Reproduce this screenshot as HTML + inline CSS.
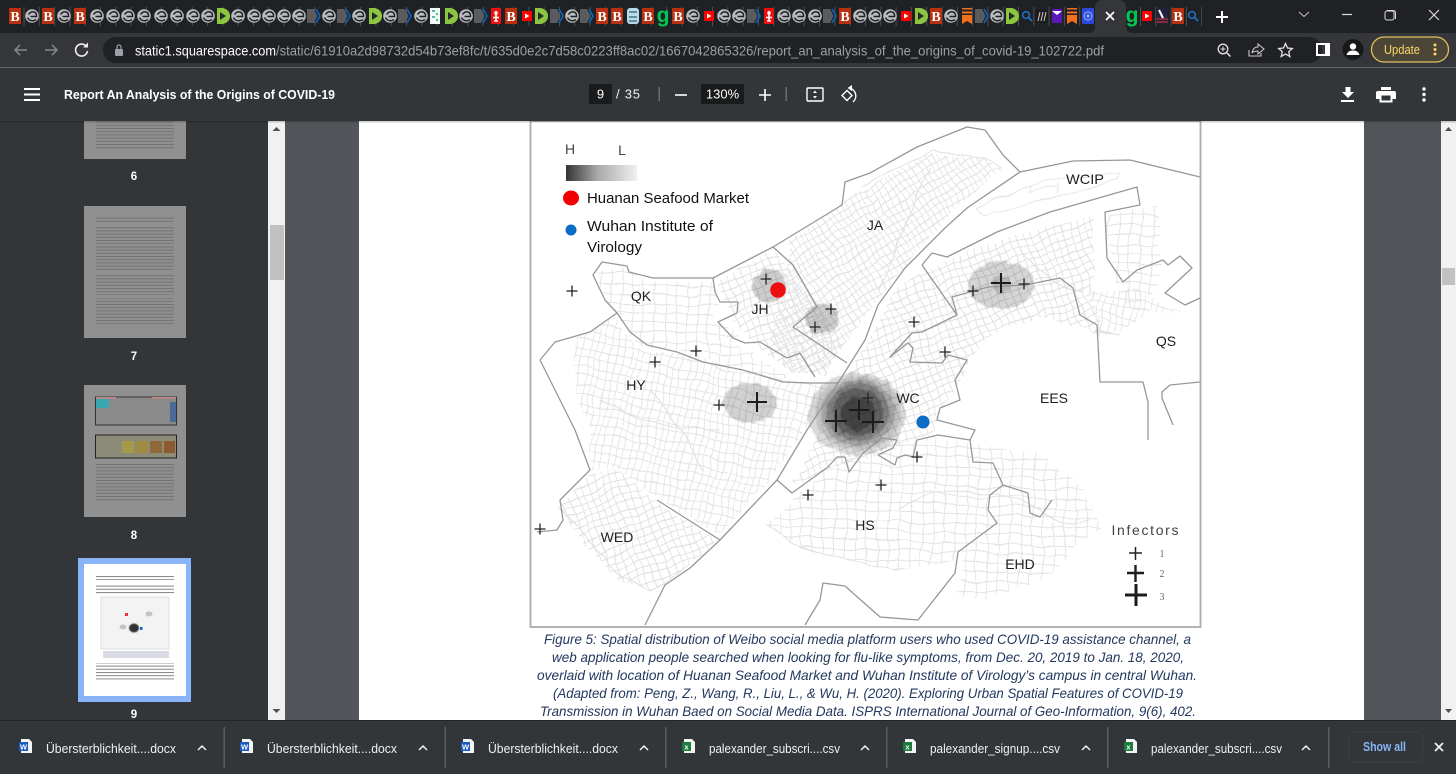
<!DOCTYPE html>
<html><head><meta charset="utf-8"><title>Report An Analysis of the Origins of COVID-19</title>
<style>html,body{margin:0;padding:0;width:1456px;height:774px;overflow:hidden;background:#323639}svg{display:block}text{font-family:"Liberation Sans",sans-serif}</style></head>
<body>
<svg xmlns="http://www.w3.org/2000/svg" width="1456" height="774" viewBox="0 0 1456 774">
<defs>
<symbol id="sw" overflow="visible"><circle r="6.800" fill="#b9bcbf"/><path d="M-3.500-1.500Q-1-5 2-4Q5-3 4.500 0.500H-1.500M-4.500 1.500Q-3 5 1 4.800Q3 4.500 4 3.500" stroke="#202124" stroke-width="1.500" fill="none"/></symbol>
<symbol id="d" overflow="visible"><path d="M-6-8H0Q7-6 7 0T0 8H-6Z" fill="#8cc63f"/><path d="M-3-4 3 0-3 4Z" fill="#26292b"/></symbol>
<symbol id="ch" overflow="visible"><path d="M-7-7H0L3.500 0 0 7H-7Z" fill="#5a5b5e"/><path d="M2-7 6 0 2 7" stroke="#0a66c2" stroke-width="1.600" fill="none"/></symbol>
<symbol id="yt" overflow="visible"><rect x="-5" y="-5" width="10" height="10" fill="#f00"/><path d="M-2-2.500 2.500 0-2 2.500Z" fill="#fff"/></symbol>
<symbol id="rd" overflow="visible"><rect x="-5" y="-8" width="10" height="16" fill="#ea1010"/><path d="M-3 1.500H3M-2 5H2M0-5V5" stroke="#fff" stroke-width="1.600"/><circle cy="-3" r="1.800" fill="#fff"/></symbol>
<symbol id="or" overflow="visible"><path d="M-5-8H5V-6.500H-5ZM-5-4.500H5V-2.500H-5ZM-5-1H5V8L0 5-5 8Z" fill="#f26f1d"/></symbol>
<symbol id="se" overflow="visible"><circle cx="-1" cy="-1" r="3.400" stroke="#1a73c8" stroke-width="1.500" fill="none"/><path d="M1.500 1.500 5 5" stroke="#1a73c8" stroke-width="1.700"/></symbol>
<pattern id="p1" width="17" height="15" patternUnits="userSpaceOnUse" patternTransform="rotate(-32)"><path d="M0 4H17M0 11H17M4 0V15M10 0V15M15 0V15" stroke="#e2e2e2" stroke-width=".9" fill="none"/></pattern>
<pattern id="p2" width="20" height="18" patternUnits="userSpaceOnUse" patternTransform="rotate(12)"><path d="M0 4H20M0 12H20M3 0V18M11 0V18M17 0V18" stroke="#e4e4e4" stroke-width=".9" fill="none"/></pattern>
<pattern id="p3" width="15" height="15" patternUnits="userSpaceOnUse" patternTransform="rotate(-20)"><path d="M0 4H15M0 11H15M4 0V15M12 0V15" stroke="#e0e0e0" stroke-width=".9" fill="none"/></pattern>
<pattern id="p4" width="22" height="19" patternUnits="userSpaceOnUse" patternTransform="rotate(2)"><path d="M0 5H22M0 15H22M5 0V19M16 0V19" stroke="#e2e2e2" stroke-width=".9" fill="none"/></pattern>
<linearGradient id="lg"><stop offset="0" stop-color="#333"/><stop offset=".45" stop-color="#aaa"/><stop offset="1" stop-color="#f0f0f0"/></linearGradient>
<filter id="bl" filterUnits="userSpaceOnUse" x="700" y="240" width="360" height="240"><feTurbulence type="fractalNoise" baseFrequency=".13" numOctaves="2" seed="7" result="n"/><feDisplacementMap in="SourceGraphic" in2="n" scale="6" xChannelSelector="R" yChannelSelector="G"/><feGaussianBlur stdDeviation=".7"/></filter>
<filter id="b5"><feGaussianBlur stdDeviation=".45"/></filter>
<filter id="wav" filterUnits="userSpaceOnUse" x="530" y="121" width="670" height="506"><feTurbulence type="fractalNoise" baseFrequency=".035" numOctaves="2" seed="4" result="n"/><feDisplacementMap in="SourceGraphic" in2="n" scale="9" xChannelSelector="R" yChannelSelector="G"/><feGaussianBlur stdDeviation=".3"/></filter>
<pattern id="tl" width="80" height="3.200" patternUnits="userSpaceOnUse"><rect width="80" height="1" fill="#444" opacity=".38"/></pattern>
<pattern id="tw" width="80" height="3.200" patternUnits="userSpaceOnUse"><rect width="80" height="1" fill="#333" opacity=".6"/></pattern>
</defs>

<!-- tab strip -->
<rect width="1456" height="33" fill="#202124"/>
<line x1="23.500" y1="16.500" x2="1092" y2="16.500" stroke="#4c4e52" stroke-width="19" stroke-dasharray="1 14.300"/>
<line x1="1140" y1="16.500" x2="1202" y2="16.500" stroke="#4c4e52" stroke-width="19" stroke-dasharray="1 14.300"/>
<g fill="#b8300f"><rect x="9" y="8" width="12" height="16"/><rect x="42" y="8" width="12" height="16"/><rect x="74" y="8" width="12" height="16"/><rect x="505" y="8" width="12" height="16"/><rect x="596" y="8" width="12" height="16"/><rect x="611" y="8" width="12" height="16"/><rect x="642" y="8" width="12" height="16"/><rect x="672" y="8" width="12" height="16"/><rect x="839" y="8" width="12" height="16"/><rect x="930" y="8" width="12" height="16"/><rect x="1172" y="8" width="12" height="16"/></g>
<g font-weight="bold" font-size="14" fill="#fff" text-anchor="middle">
<text x="15" y="21" style="font-family:'Liberation Serif',serif">B</text><text x="48" y="21" style="font-family:'Liberation Serif',serif">B</text><text x="80" y="21" style="font-family:'Liberation Serif',serif">B</text><text x="511" y="21" style="font-family:'Liberation Serif',serif">B</text><text x="602" y="21" style="font-family:'Liberation Serif',serif">B</text><text x="617" y="21" style="font-family:'Liberation Serif',serif">B</text><text x="648" y="21" style="font-family:'Liberation Serif',serif">B</text><text x="678" y="21" style="font-family:'Liberation Serif',serif">B</text><text x="845" y="21" style="font-family:'Liberation Serif',serif">B</text><text x="936" y="21" style="font-family:'Liberation Serif',serif">B</text><text x="1178" y="21" style="font-family:'Liberation Serif',serif">B</text>
</g>
<g>
<use href="#sw" x="32" y="16"/><use href="#sw" x="64" y="16"/><use href="#sw" x="97" y="16"/><use href="#sw" x="113" y="16"/><use href="#sw" x="128" y="16"/><use href="#sw" x="144" y="16"/><use href="#sw" x="161" y="16"/><use href="#sw" x="177" y="16"/><use href="#sw" x="193" y="16"/><use href="#sw" x="208" y="16"/><use href="#sw" x="238" y="16"/><use href="#sw" x="254" y="16"/><use href="#sw" x="269" y="16"/><use href="#sw" x="284" y="16"/><use href="#sw" x="299" y="16"/><use href="#sw" x="329" y="16"/><use href="#sw" x="359" y="16"/><use href="#sw" x="390" y="16"/><use href="#sw" x="421" y="16"/><use href="#sw" x="466" y="16"/><use href="#sw" x="572" y="16"/><use href="#sw" x="693" y="16"/><use href="#sw" x="724" y="16"/><use href="#sw" x="739" y="16"/><use href="#sw" x="784" y="16"/><use href="#sw" x="799" y="16"/><use href="#sw" x="815" y="16"/><use href="#sw" x="860" y="16"/><use href="#sw" x="875" y="16"/><use href="#sw" x="890" y="16"/><use href="#sw" x="951" y="16"/><use href="#sw" x="997" y="16"/>
<use href="#d" x="223" y="16"/><use href="#d" x="375" y="16"/><use href="#d" x="451" y="16"/><use href="#d" x="541" y="16"/><use href="#d" x="921" y="16"/><use href="#d" x="1012" y="16"/>
<use href="#ch" x="314" y="16"/><use href="#ch" x="344" y="16"/><use href="#ch" x="405" y="16"/><use href="#ch" x="481" y="16"/><use href="#ch" x="557" y="16"/><use href="#ch" x="587" y="16"/><use href="#ch" x="754" y="16"/><use href="#ch" x="830" y="16"/><use href="#ch" x="982" y="16"/>
<use href="#yt" x="527" y="16"/><use href="#yt" x="709" y="16"/><use href="#yt" x="906" y="16"/><use href="#yt" x="1147" y="16"/>
<use href="#rd" x="496" y="16"/><use href="#rd" x="769" y="16"/>
<use href="#or" x="967" y="16"/><use href="#or" x="1072" y="16"/>
<use href="#se" x="1027" y="16"/><use href="#se" x="1193" y="16"/>
</g>
<rect x="430" y="8" width="10" height="16" fill="#f4f8f6"/><path d="M432 11h3M436 14h2M432 17h3M436 20h2" stroke="#4fb8a8" stroke-width="2"/>
<rect x="627" y="8" width="12" height="16" rx="3" fill="#b8dcec"/><path d="M629 12h8M629 17h8M629 21h8" stroke="#33606e" stroke-width="1.200"/>
<text x="663" y="22" font-size="21" font-weight="bold" fill="#00c853" text-anchor="middle">g</text>
<text x="1132" y="22" font-size="21" font-weight="bold" fill="#00c853" text-anchor="middle">g</text>
<rect x="1036" y="10" width="12" height="13" fill="#1b1b1b"/><path d="M1038 21l2-9M1041 21l2-9M1044 21l2-9" stroke="#ccc"/>
<rect x="1052" y="9" width="10" height="14" fill="#5b18b8"/><path d="M1052 11h10l-5 4z" fill="#fff"/>
<rect x="1082" y="8" width="12" height="16" rx="2" fill="#2c4bd8"/><circle cx="1088" cy="16" r="4" fill="none" stroke="#9fb0ff"/><circle cx="1088" cy="16" r="1.500" fill="#9fb0ff"/>
<rect x="1156" y="8" width="12" height="16" fill="#23233f"/><path d="M1156 19h12M1156 22h12" stroke="#d33"/><path d="M1159 10l4 8" stroke="#fff" stroke-width="2"/>
<path d="M1088 33Q1095 33 1095 26V8Q1095 0 1103 0H1118Q1126 0 1126 8V26Q1126 33 1133 33Z" fill="#35363a"/>
<path d="M1106 12l8 8M1114 12l-8 8" stroke="#fff" stroke-width="1.700"/>
<path d="M1222 11v12M1216 17h12" stroke="#fff" stroke-width="2"/>
<path d="M1299 12l5 4.500 5-4.500" stroke="#c8c8c8" stroke-width="1" fill="none"/>
<path d="M1342 14.500h10" stroke="#ddd" stroke-width="1.200"/>
<rect x="1385" y="11" width="9" height="9" rx="2" fill="none" stroke="#ddd"/><path d="M1387 10.500h6q2.500 0 2.500 2.500v6" fill="none" stroke="#ddd"/>
<path d="M1429 10l10 10M1439 10l-10 10" stroke="#ddd" stroke-width="1.200"/>

<!-- toolbar -->
<rect y="33" width="1456" height="34" fill="#35363a"/>
<rect y="67" width="1456" height="1" fill="#66686b"/>
<rect x="103" y="37" width="1219" height="26" rx="13" fill="#202124"/>
<path d="M27 50H15M20 45l-5 5 5 5" stroke="#85888c" stroke-width="1.500" fill="none"/>
<path d="M45 50H57M52 45l5 5-5 5" stroke="#85888c" stroke-width="1.500" fill="none"/>
<path d="M86 46a6 6 0 1 0 1.500 5" stroke="#eee" stroke-width="1.600" fill="none"/><path d="M88 42.500v5h-5z" fill="#eee"/>
<rect x="115" y="49" width="8" height="7" rx="1" fill="#9aa0a6"/><path d="M117 49v-2a2 2 0 0 1 4 0v2" stroke="#9aa0a6" fill="none" stroke-width="1.200"/>
<text x="135" y="55.500" font-size="14" fill="#fff" textLength="141" lengthAdjust="spacingAndGlyphs">static1.squarespace.com</text>
<text x="276" y="55.500" font-size="14" fill="#9aa0a6" textLength="828" lengthAdjust="spacingAndGlyphs">/static/61910a2d98732d54b73ef8fc/t/635d0e2c7d58c0223ff8ac02/1667042865326/report_an_analysis_of_the_origins_of_covid-19_102722.pdf</text>
<circle cx="1223" cy="49" r="4.800" fill="none" stroke="#e4e4e4" stroke-width="1.300"/><path d="M1227 53l3.500 3.500" stroke="#e4e4e4" stroke-width="1.500"/><path d="M1220.500 49h5M1223 46.500v5" stroke="#e4e4e4"/>
<path d="M1249 50v6h12v-3M1252 53q1-6 6-6v-3l6 5-6 5v-3q-4 0-6 2" stroke="#c8c8c8" fill="none" stroke-width="1.100"/>
<path d="M1285.500 43.500l2 4.500 4.800.5-3.600 3.200 1.100 4.800-4.300-2.500-4.300 2.500 1.100-4.800-3.600-3.200 4.800-.5z" stroke="#e4e4e4" stroke-width="1.300" fill="none"/>
<rect x="1317" y="44" width="12" height="11" fill="none" stroke="#fff" stroke-width="2"/><rect x="1325" y="44" width="4" height="11" fill="#fff"/>
<circle cx="1353" cy="49.500" r="10.500" fill="#17181a"/><circle cx="1353" cy="46.500" r="3.200" fill="#fff"/><path d="M1346.500 55q1-4.500 6.500-4.500t6.500 4.500z" fill="#fff"/>
<rect x="1371.500" y="37" width="77" height="25" rx="12.500" fill="#4b4638" stroke="#e0c05a" stroke-width="1.300"/>
<text x="1384" y="54" font-size="12.500" fill="#fdd663" textLength="36" lengthAdjust="spacingAndGlyphs">Update</text>
<circle cx="1435" cy="45" r="1.500" fill="#fdd663"/><circle cx="1435" cy="49.500" r="1.500" fill="#fdd663"/><circle cx="1435" cy="54" r="1.500" fill="#fdd663"/>

<!-- pdf viewer base -->
<rect y="68" width="1456" height="652" fill="#323639"/>
<rect x="285" y="121" width="1156" height="599" fill="#52565a"/>
<rect x="268" y="121" width="17" height="599" fill="#f1f1f1"/>
<rect x="270" y="225" width="14" height="55" fill="#c1c1c1"/>
<path d="M272.500 131l4-4 4 4z" fill="#505050"/><path d="M272.500 709l4 4 4-4z" fill="#505050"/>
<rect x="1441" y="121" width="15" height="599" fill="#f1f1f1"/>
<rect x="1442" y="268" width="13" height="17" fill="#c1c1c1"/>
<path d="M1445 131l3.500-4 3.500 4z" fill="#505050"/><path d="M1445 709l3.500 4 3.500-4z" fill="#505050"/>
<rect x="359" y="121" width="1005" height="599" fill="#fff"/>

<!-- thumbnails -->
<rect x="84" y="121" width="102" height="38" fill="#909090"/><rect x="96" y="121" width="78" height="29" fill="url(#tl)"/>
<rect x="84" y="206" width="102" height="132" fill="#909090"/><rect x="96" y="216" width="78" height="108" fill="url(#tl)"/>
<g fill="#909090"><rect x="96" y="224" width="78" height="3"/><rect x="96" y="244" width="78" height="2"/><rect x="96" y="270" width="78" height="3"/><rect x="96" y="295" width="78" height="3"/></g>
<rect x="84" y="385" width="102" height="132" fill="#909090"/>
<rect x="95.500" y="397" width="81" height="28" fill="#8a8a8a" stroke="#333"/><rect x="96" y="398" width="13" height="10" fill="#3aa6b0"/><rect x="170" y="402" width="6" height="20" fill="#4c6a98"/><rect x="96" y="397" width="20" height="2" fill="#b88"/><rect x="152" y="397" width="24" height="2" fill="#b88"/>
<rect x="95.500" y="435" width="81" height="23" fill="#8b8b78" stroke="#222"/><rect x="122" y="441" width="12" height="12" fill="#a59a4a"/><rect x="136" y="441" width="12" height="12" fill="#a08a40"/><rect x="150" y="441" width="12" height="12" fill="#8f6a38"/><rect x="164" y="441" width="11" height="12" fill="#8b5a30"/>
<rect x="96" y="463" width="78" height="39" fill="url(#tl)"/>
<rect x="78" y="558" width="113" height="144" fill="#8ab4f8"/>
<rect x="84" y="564" width="102" height="132" fill="#fff"/>
<rect x="96" y="575" width="78" height="5" fill="url(#tw)"/><rect x="96" y="584" width="78" height="10" fill="url(#tw)"/>
<rect x="101" y="597" width="68" height="52" fill="#f3f3f3" stroke="#ddd"/><ellipse cx="134" cy="628" rx="5" ry="4.500" fill="#333" filter="url(#b5)"/><rect x="125" y="613" width="3" height="3" fill="#e33"/><rect x="140" y="627" width="2.500" height="3" fill="#16c"/><ellipse cx="123" cy="627" rx="3.500" ry="2.500" fill="#c4c4c4"/><ellipse cx="149" cy="614" rx="3.500" ry="2.500" fill="#c4c4c4"/>
<rect x="103" y="651" width="66" height="7" fill="#b9c0cf" opacity=".55"/>
<rect x="96" y="663" width="78" height="18" fill="url(#tw)"/>
<g font-size="11.500" font-weight="bold" fill="#fff" text-anchor="middle"><text x="134" y="180">6</text><text x="134" y="360">7</text><text x="134" y="539">8</text><text x="134" y="718">9</text></g>

<!-- map -->
<g>
<rect x="530.500" y="121" width="670" height="506" fill="#fff"/>
<g filter="url(#wav)">
<polygon fill="url(#p1)" points="790,240 860,190 930,155 985,158 1002,170 960,205 905,265 870,310 845,345 825,375 790,372 770,340 780,300"/>
<polygon fill="url(#p4)" points="597,270 627,270 655,282 713,282 720,300 712,318 735,330 740,345 790,378 770,380 720,365 680,352 640,345 620,320 600,290"/>
<polygon fill="url(#p3)" points="717,282 773,250 790,270 845,345 825,375 790,372 745,335 730,320 725,300"/>
<polygon fill="url(#p2)" points="575,340 615,318 640,350 690,355 740,372 800,382 830,385 805,430 775,475 720,535 660,500 620,470 590,470 590,430 575,400"/>
<polygon fill="url(#p3)" points="558,505 590,475 620,470 660,505 717,540 690,565 650,590 620,580 580,540"/>
<polygon fill="url(#p3)" points="862,350 900,285 925,270 985,245 1040,228 1095,217 1092,290 1100,335 1075,325 1040,318 1000,328 968,358 965,375 945,405 935,430 905,445 860,462 830,470 790,487 812,445 835,395"/>
<polygon fill="url(#p4)" points="763,525 797,497 828,468 867,450 933,437 967,443 1040,455 1085,490 1102,530 1075,545 1050,577 983,600 957,593 962,560 900,570 853,560 800,547"/>
<polygon fill="url(#p4)" points="1105,215 1157,207 1160,260 1158,290 1130,310 1115,280"/>
<polygon fill="url(#p2)" points="1090,290 1140,290 1165,305 1185,313 1150,312 1120,330 1098,335"/>
<path d="M978 207 1017 190 1067 177 1118 173 1117 180 1057 197 987 215ZM1030 187 1030 193 1057 187M1058 183V195" fill="none" stroke="#e6e6e6"/>
<path d="M860 185 933 152 987 158 1002 168M558 505 620 575 650 590 690 565M763 525 800 547 853 560 900 570M1095 330 1120 335" fill="none" stroke="#e0e0e0"/>
<path d="M650 390Q680 420 700 470M600 400Q650 430 720 430M930 170Q900 230 880 290M1020 250Q1050 290 1085 290M900 510Q960 470 1040 510Q1060 530 1090 520" fill="none" stroke="#e0e0e0" stroke-width="1.100"/>
</g>
<g filter="url(#bl)" fill="#000">
<ellipse cx="857" cy="414" rx="49" ry="41" opacity=".15"/>
<ellipse cx="858" cy="413" rx="43" ry="37" opacity=".1"/>
<ellipse cx="858" cy="413" rx="37" ry="33" opacity=".17"/>
<ellipse cx="858" cy="412" rx="31" ry="29" opacity=".22"/>
<ellipse cx="858" cy="412" rx="25" ry="24" opacity=".25"/>
<ellipse cx="858" cy="414" rx="17" ry="17" opacity=".3"/>
<ellipse cx="750" cy="403" rx="27" ry="20" opacity=".18"/>
<ellipse cx="1001" cy="285" rx="33" ry="24" opacity=".17"/><ellipse cx="1001" cy="285" rx="9" ry="9" opacity=".14"/>
<ellipse cx="769" cy="286" rx="17" ry="17" opacity=".2"/>
<ellipse cx="822" cy="319" rx="17" ry="15" opacity=".2"/>
</g>
<g fill="none" stroke="#979797" stroke-width="1.300" stroke-linejoin="round">
<path d="M540 360 555 342 590 332 617 313 605 300 593 275 602 262 627 266 629 272 653 278 713 278 773 247 842 205 845 182 870 173 917 147 967 127 985 130 1003 155 1020 172 1073 161 1130 160 1200 177"/>
<path d="M540 360 575 430 590 470 560 500 563 520 557 530 537 532"/>
<path d="M1020 172 967 208 945 228 905 268 878 305 865 340 838 383 807 430 777 480 720 540 690 568 665 585 645 625"/>
<path d="M657 500 720 540"/>
<path d="M617 313 630 332 647 345 677 352 703 362 743 370 783 382 810 383 838 383"/>
<path d="M713 278 715 292 720 302 738 302 737 313 718 322 733 338 745 343 760 342 787 358 800 353 815 377"/>
<path d="M773 247 793 265 817 307 793 327 847 363"/>
<path d="M777 480 792 493 828 467 837 457 845 457 849 472 863 453 882 438 897 440 893 448 878 455 895 465 897 458 905 455 913 457 917 440 938 435 970 440 975 430 937 420 940 408 960 400 955 380 967 360 948 355 942 363 910 362 913 348 908 343 890 357 912 333 922 332 957 315 952 297 988 287 1025 285 1060 278 1073 288 1080 315 1097 325 1100 382 1143 382 1148 402 1148 440"/>
<path d="M922 265 957 315"/>
<path d="M932 253 947 257 997 232 1050 212 1137 187 1140 205 1105 212 1107 258 1123 282 1137 270 1163 260 1168 265 1180 256 1192 268 1165 293 1185 305 1200 298"/>
<path d="M932 253 922 265"/>
<path d="M970 440 973 462 993 463 1003 485 1028 493 1030 513 1040 517 1052 500"/>
<path d="M1003 485 990 495 988 510 997 523 958 552 955 573 918 620 880 617 845 586 823 583 820 600 805 625"/>
<path d="M1200 382 1170 385 1162 392 1162 398 1173 425"/>
</g>
<g stroke="#222" stroke-width="1.300" fill="none">
<path d="M566.500 291h11M572 285.500v11M760.500 279h11M766 273.500v11M825.500 309h11M831 303.500v11M809.500 327h11M815 321.500v11M649.500 362h11M655 356.500v11M690.500 351h11M696 345.500v11M713.500 405h11M719 399.500v11M908.500 322h11M914 316.500v11M939.500 352h11M945 346.500v11M967.500 291h11M973 285.500v11M1018.500 284h11M1024 278.500v11M862.500 398h11M868 392.500v11M911.500 457h11M917 451.500v11M875.500 485h11M881 479.500v11M802.500 495h11M808 489.500v11M534.500 529h11M540 523.500v11"/>
<path stroke-width="1.500" d="M1129 553h13M1135.500 547v13"/>
</g>
<g stroke="#1c1c1c" stroke-width="2" fill="none">
<path d="M747 402h20M757 392v20M991 283h20M1001 273v20M849 410h20M859 400v20"/>
<path d="M825 421h22M836 410v22M862 422h22M873 411v22"/>
<path stroke-width="2.400" d="M1127 573h17M1135.500 565v17"/>
<path stroke-width="3" d="M1125 595h22M1136 584v22"/>
</g>
<g font-size="14" fill="#1e1e1e" text-anchor="middle">
<text x="570" y="154" fill="#444">H</text><text x="622" y="155" fill="#444">L</text>
<text x="1085" y="184" textLength="38" lengthAdjust="spacingAndGlyphs">WCIP</text><text x="875" y="230">JA</text><text x="641" y="301">QK</text><text x="760" y="314">JH</text><text x="636" y="390">HY</text><text x="908" y="403">WC</text><text x="1166" y="346">QS</text><text x="1054" y="403">EES</text><text x="617" y="542">WED</text><text x="865" y="530">HS</text><text x="1020" y="569">EHD</text>
<text x="1145" y="535" font-size="14" fill="#444" textLength="67" lengthAdjust="spacing">Infectors</text>
</g>
<g font-size="10" fill="#666" text-anchor="middle"><text x="1162" y="557" style="font-family:'Liberation Serif',serif">1</text><text x="1162" y="577" style="font-family:'Liberation Serif',serif">2</text><text x="1162" y="600" style="font-family:'Liberation Serif',serif">3</text></g>
<rect x="566" y="165" width="71" height="16" fill="url(#lg)"/>
<ellipse cx="571" cy="198" rx="8" ry="7.500" fill="#f00000"/>
<circle cx="571" cy="230" r="5.500" fill="#0a6cc4"/>
<circle cx="778" cy="290" r="7.800" fill="#ee1010"/>
<circle cx="923" cy="422" r="6.500" fill="#0a6cc4"/>
<g font-size="15" fill="#111">
<text x="587" y="203" textLength="162" lengthAdjust="spacingAndGlyphs">Huanan Seafood Market</text>
<text x="587" y="231" textLength="126" lengthAdjust="spacingAndGlyphs">Wuhan Institute of</text>
<text x="587" y="252" textLength="55" lengthAdjust="spacingAndGlyphs">Virology</text>
</g>
<rect x="530.500" y="121" width="670" height="506" fill="none" stroke="#ababab" stroke-width="1.800"/>
</g>
<g font-size="14" font-style="italic" fill="#23385f">
<text x="544" y="644" textLength="647" lengthAdjust="spacingAndGlyphs">Figure 5: Spatial distribution of Weibo social media platform users who used COVID-19 assistance channel, a</text>
<text x="552" y="662" textLength="632" lengthAdjust="spacingAndGlyphs">web application people searched when looking for flu-like symptoms, from Dec. 20, 2019 to Jan. 18, 2020,</text>
<text x="537" y="680" textLength="660" lengthAdjust="spacingAndGlyphs">overlaid with location of Huanan Seafood Market and Wuhan Institute of Virology’s campus in central Wuhan.</text>
<text x="553" y="698" textLength="630" lengthAdjust="spacingAndGlyphs">(Adapted from: Peng, Z., Wang, R., Liu, L., &amp; Wu, H. (2020). Exploring Urban Spatial Features of COVID-19</text>
<text x="540" y="716" textLength="656" lengthAdjust="spacingAndGlyphs">Transmission in Wuhan Baed on Social Media Data. ISPRS International Journal of Geo-Information, 9(6), 402.</text>
</g>

<!-- pdf toolbar -->
<rect y="68" width="1456" height="53" fill="#323639"/>
<rect y="121" width="1456" height="1.500" fill="#000" opacity=".18"/>
<path d="M24 89h16M24 94.500h16M24 100h16" stroke="#fff" stroke-width="2"/>
<text x="64" y="99" font-size="12.500" font-weight="bold" fill="#fff" textLength="271" lengthAdjust="spacingAndGlyphs">Report An Analysis of the Origins of COVID-19</text>
<rect x="589" y="84" width="23" height="20" fill="#191b1c"/>
<text x="600.500" y="98.500" font-size="13" fill="#fff" text-anchor="middle">9</text>
<text x="616" y="98.500" font-size="13" fill="#f1f1f1" textLength="24">/ 35</text>
<rect x="658.500" y="87" width="1.500" height="14" fill="#6a6d70"/>
<path d="M675 95h12" stroke="#fff" stroke-width="1.600"/>
<rect x="701" y="84" width="43" height="20" fill="#191b1c"/>
<text x="722.500" y="98.500" font-size="13" fill="#fff" text-anchor="middle">130%</text>
<path d="M759 95h12M765 89v12" stroke="#fff" stroke-width="1.600"/>
<rect x="785.500" y="87" width="1.500" height="14" fill="#6a6d70"/>
<rect x="807" y="88" width="16" height="13" rx="1" fill="none" stroke="#fff" stroke-width="1.400"/><path d="M813 93l2-2.500 2 2.500zM813 96l2 2.500 2-2.500z" fill="#fff"/>
<path d="M847 90.500l-5 5 5 5 5-5z" fill="none" stroke="#fff" stroke-width="1.400"/><path d="M849 88a8 8 0 0 1 4 14" fill="none" stroke="#fff" stroke-width="1.400"/><path d="M852 85v6l-4.500-3z" fill="#fff"/>
<path d="M1345.500 87h5v5h3.500l-6 6-6-6h3.500zM1341 100h13v2h-13z" fill="#fff"/>
<path d="M1381 87h10v3h-10zM1378 91h16q2 0 2 2v6h-3.500v3.500h-13V99H1376v-6q0-2 2-2z" fill="#fff"/><rect x="1381.500" y="95.500" width="9" height="5" fill="#323639"/>
<circle cx="1424" cy="89" r="1.700" fill="#fff"/><circle cx="1424" cy="94.500" r="1.700" fill="#fff"/><circle cx="1424" cy="100" r="1.700" fill="#fff"/>

<!-- download bar -->
<rect y="720" width="1456" height="54" fill="#323639"/>
<rect y="720" width="1456" height="1" fill="#222426"/>
<g fill="#5a5d60"><rect x="223.500" y="727" width="1.500" height="41"/><rect x="444.500" y="727" width="1.500" height="41"/><rect x="665" y="727" width="1.500" height="41"/><rect x="886" y="727" width="1.500" height="41"/><rect x="1107" y="727" width="1.500" height="41"/><rect x="1328" y="727" width="1.500" height="41"/></g>
<g fill="#f4f4f4"><path d="M21 739h8l3 3v11H21z"/><path d="M242 739h8l3 3v11h-11z"/><path d="M463 739h8l3 3v11h-11z"/><path d="M684 739h8l3 3v11h-11z"/><path d="M905 739h8l3 3v11h-11z"/><path d="M1126 739h8l3 3v11h-11z"/></g>
<g font-size="7.500" font-weight="bold" fill="#fff" text-anchor="middle">
<rect x="19" y="742" width="9" height="9" fill="#1a5cc0"/><text x="23.500" y="749.500">W</text>
<rect x="240" y="742" width="9" height="9" fill="#1a5cc0"/><text x="244.500" y="749.500">W</text>
<rect x="461" y="742" width="9" height="9" fill="#1a5cc0"/><text x="465.500" y="749.500">W</text>
<rect x="682" y="742" width="9" height="9" fill="#1e7b3e"/><text x="686.500" y="749.500">x</text>
<rect x="903" y="742" width="9" height="9" fill="#1e7b3e"/><text x="907.500" y="749.500">x</text>
<rect x="1124" y="742" width="9" height="9" fill="#1e7b3e"/><text x="1128.500" y="749.500">x</text>
</g>
<g font-size="13" fill="#f0f0f0">
<text x="46" y="753" textLength="130" lengthAdjust="spacingAndGlyphs">Übersterblichkeit....docx</text>
<text x="267" y="753" textLength="130" lengthAdjust="spacingAndGlyphs">Übersterblichkeit....docx</text>
<text x="488" y="753" textLength="130" lengthAdjust="spacingAndGlyphs">Übersterblichkeit....docx</text>
<text x="709" y="753" textLength="131" lengthAdjust="spacingAndGlyphs">palexander_subscri....csv</text>
<text x="930" y="753" textLength="130" lengthAdjust="spacingAndGlyphs">palexander_signup....csv</text>
<text x="1151" y="753" textLength="131" lengthAdjust="spacingAndGlyphs">palexander_subscri....csv</text>
</g>
<g stroke="#f0f0f0" stroke-width="1.500" fill="none"><path d="M198 750l4-4 4 4M419 750l4-4 4 4M640 750l4-4 4 4M861 750l4-4 4 4M1082 750l4-4 4 4M1302 750l4-4 4 4"/></g>
<rect x="1348.500" y="732" width="74" height="30" rx="4" fill="none" stroke="#3c3e42"/>
<text x="1363" y="751" font-size="12.500" font-weight="bold" fill="#8ab4f8" textLength="43" lengthAdjust="spacingAndGlyphs">Show all</text>
<path d="M1435 743l8 8M1443 743l-8 8" stroke="#f0f0f0" stroke-width="1.800"/>
</svg>
</body></html>
